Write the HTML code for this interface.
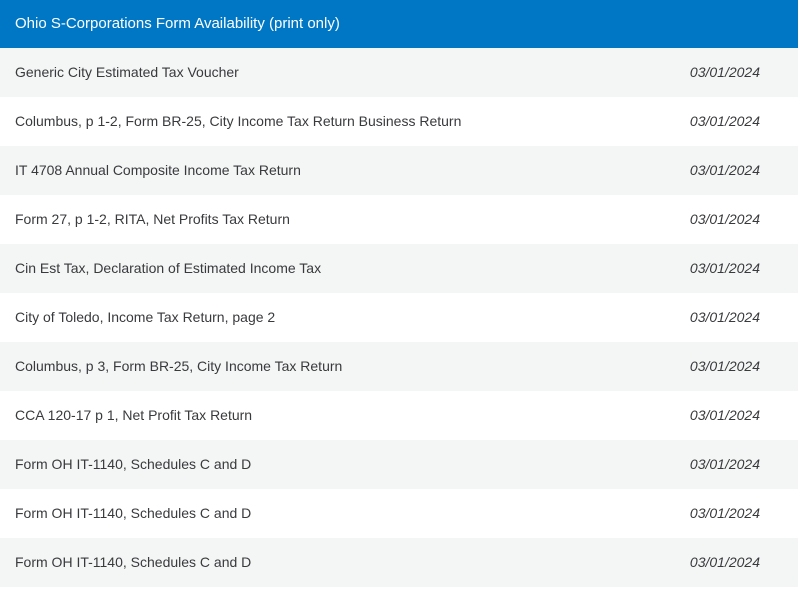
<!DOCTYPE html>
<html><head><style>
body{margin:0;width:798px;height:594px;background:#fff;font-family:"Liberation Sans",sans-serif;overflow:hidden}
.h{height:48px;background:#0077c5;color:#fff;font-size:15px;line-height:47px;padding-left:15px}
.r{height:49px;line-height:49px;font-size:14px;color:#393a3d;padding-left:15px;position:relative}
.r:nth-child(even){background:#f4f5f5}
.r span{position:absolute;right:38px;top:0;font-style:italic}
</style></head><body>
<div class="h">Ohio S-Corporations Form Availability (print only)</div>
<div>
<div class="r" style="background:#f4f5f5">Generic City Estimated Tax Voucher<span>03/01/2024</span></div>
<div class="r" style="background:#fff">Columbus, p 1-2, Form BR-25, City Income Tax Return Business Return<span>03/01/2024</span></div>
<div class="r" style="background:#f4f5f5">IT 4708 Annual Composite Income Tax Return<span>03/01/2024</span></div>
<div class="r" style="background:#fff">Form 27, p 1-2, RITA, Net Profits Tax Return<span>03/01/2024</span></div>
<div class="r" style="background:#f4f5f5">Cin Est Tax, Declaration of Estimated Income Tax<span>03/01/2024</span></div>
<div class="r" style="background:#fff">City of Toledo, Income Tax Return, page 2<span>03/01/2024</span></div>
<div class="r" style="background:#f4f5f5">Columbus, p 3, Form BR-25, City Income Tax Return<span>03/01/2024</span></div>
<div class="r" style="background:#fff">CCA 120-17 p 1, Net Profit Tax Return<span>03/01/2024</span></div>
<div class="r" style="background:#f4f5f5">Form OH IT-1140, Schedules C and D<span>03/01/2024</span></div>
<div class="r" style="background:#fff">Form OH IT-1140, Schedules C and D<span>03/01/2024</span></div>
<div class="r" style="background:#f4f5f5">Form OH IT-1140, Schedules C and D<span>03/01/2024</span></div>
</div>
</body></html>
